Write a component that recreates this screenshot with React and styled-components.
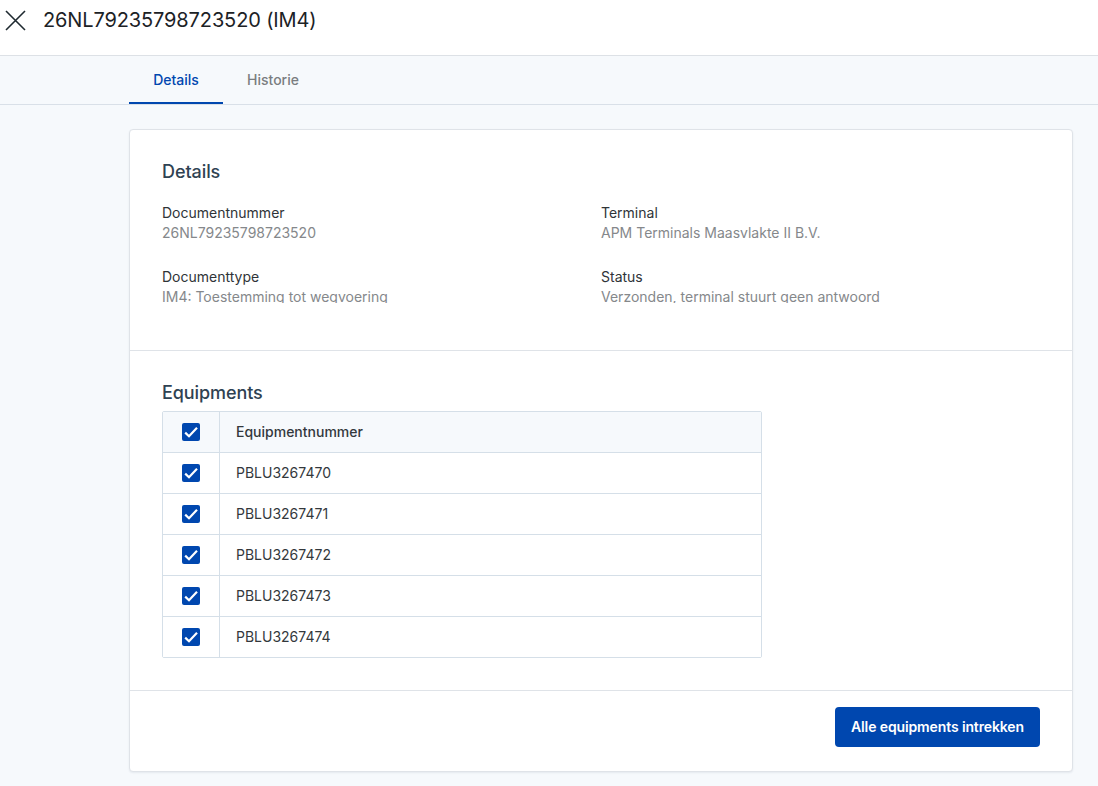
import React from "react";
import styled, { createGlobalStyle } from "styled-components";

const Global = createGlobalStyle`
  html, body { margin: 0; padding: 0; height: 100%; background: #f6f9fc; overflow: hidden; }
  body { font-family: Inter, "Liberation Sans", sans-serif; }
`;
const Page = styled.div`width: 1098px; height: 786px; overflow: hidden; background: #f6f9fc;`;
const Header = styled.header`
  height: 55px; background: #fff; border-bottom: 1px solid #dde1e6;
  display: flex; align-items: flex-start; box-sizing: content-box;
`;
const CloseButton = styled.button`
  width: 43px; height: 40px; padding: 0 0 0 5px; border: 0; background: none;
  display: flex; align-items: center; justify-content: flex-start; color: #1f2a30;
`;
const Title = styled.h1`
  margin: 0; font-size: 20px; line-height: 40px; font-weight: 400; color: #1c2226; letter-spacing: -0.125px;
`;
const TabBar = styled.nav`
  height: 48px; border-bottom: 1px solid #d9e0e8; padding-left: 129px; display: flex;
`;
const Tab = styled.div`
  width: ${p => p.$w}px; height: 48px; display: flex; align-items: center; justify-content: center;
  font-size: 14px; font-weight: 500; padding-top: 1px; box-sizing: border-box;
  color: ${p => (p.$active ? "#0047af" : "#7a7d80")};
  border-bottom: 2px solid ${p => (p.$active ? "#0047af" : "transparent")};
`;
const Main = styled.main`padding: 24px 25px 0 129px;`;
const Card = styled.section`
  background: #fff; border: 1px solid #dfe3e8; border-radius: 4px; height: 643px;
  box-sizing: border-box; box-shadow: 0 1px 2px rgba(30, 50, 80, 0.08);
  display: flex; flex-direction: column;
`;
const Section = styled.div`
  padding: ${p => p.$pad}; height: ${p => p.$h}px; box-sizing: border-box;
  border-bottom: ${p => (p.$line ? "1px solid #dfe3e8" : "0")};
`;
const Heading = styled.h2`
  margin: 0; font-size: 18px; line-height: 24px; font-weight: 500; color: #2f4252; letter-spacing: -0.08px;
`;
const Fields = styled.div`
  display: grid; grid-template-columns: 439px 1fr; grid-auto-rows: 40px; row-gap: 24px; margin-top: 19px;
  height: 100px; overflow: hidden;
`;
const Field = styled.div`font-size: 14px; line-height: 20px;`;
const Label = styled.div`color: #2f3438;`;
const Value = styled.div`color: #85888b;`;
const Table = styled.div`
  width: 600px; margin-top: 6px; border: 1px solid #d5dfe8; border-radius: 2px; box-sizing: border-box;
`;
const Row = styled.div`
  display: grid; grid-template-columns: 57px 1fr; height: ${p => (p.$last ? 40 : 41)}px;
  box-sizing: border-box; background: ${p => (p.$head ? "#f6f9fc" : "#fff")};
  border-bottom: ${p => (p.$last ? "0" : "1px solid #d5dfe8")};
`;
const CheckCell = styled.div`
  display: flex; align-items: center; justify-content: center; border-right: 1px solid #d5dfe8;
`;
const TextCell = styled.div`
  display: flex; align-items: center; padding: 0 0 1px 16px; box-sizing: border-box; font-size: 14px; color: #33383c;
  font-weight: ${p => (p.$head ? 500 : 400)};
`;
const Box = styled.span`
  width: 18px; height: 18px; border-radius: 2px; background: #0047af;
  display: flex; align-items: center; justify-content: center;
`;
const Footer = styled.div`flex: 1; padding: 16px 32px 0 0; display: flex; justify-content: flex-end; align-items: flex-start;`;
const Primary = styled.button`
  width: 205px; height: 40px; border: 0; border-radius: 4px; background: #0047af; color: #fff;
  padding: 0 0 2px; letter-spacing: -0.12px;
  font: 600 14px Inter, "Liberation Sans", sans-serif;
`;

const Check = () => (
  <Box>
    <svg width="18" height="18" viewBox="0 0 18 18" fill="none">
      <path d="M3.2 9.6 7 13.2 15 4.8" stroke="#fff" strokeWidth="2.2" />
    </svg>
  </Box>
);

const equipments = ["PBLU3267470", "PBLU3267471", "PBLU3267472", "PBLU3267473", "PBLU3267474"];
const fields = [
  ["Documentnummer", "26NL79235798723520"],
  ["Terminal", "APM Terminals Maasvlakte II B.V."],
  ["Documenttype", "IM4: Toestemming tot wegvoering"],
  ["Status", "Verzonden, terminal stuurt geen antwoord"],
];

export default function App() {
  return (
    <Page>
      <Global />
      <Header>
        <CloseButton aria-label="Sluiten">
          <svg width="21" height="21" viewBox="0 0 21 21" fill="none">
            <path d="M1 1 20 20M20 1 1 20" stroke="#1f2a30" strokeWidth="1.6" />
          </svg>
        </CloseButton>
        <Title>26NL79235798723520 (IM4)</Title>
      </Header>
      <TabBar>
        <Tab $active $w={94}>Details</Tab>
        <Tab $w={100}>Historie</Tab>
      </TabBar>
      <Main>
        <Card>
          <Section $line $h={221} $pad="30px 32px 0">
            <Heading>Details</Heading>
            <Fields>
              {fields.map(([l, v]) => (
                <Field key={l}>
                  <Label>{l}</Label>
                  <Value>{v}</Value>
                </Field>
              ))}
            </Fields>
          </Section>
          <Section $line $h={340} $pad="30px 32px 0">
            <Heading>Equipments</Heading>
            <Table>
              <Row $head>
                <CheckCell><Check /></CheckCell>
                <TextCell $head>Equipmentnummer</TextCell>
              </Row>
              {equipments.map((e, i) => (
                <Row key={e} $last={i === equipments.length - 1}>
                  <CheckCell><Check /></CheckCell>
                  <TextCell>{e}</TextCell>
                </Row>
              ))}
            </Table>
          </Section>
          <Footer>
            <Primary>Alle equipments intrekken</Primary>
          </Footer>
        </Card>
      </Main>
    </Page>
  );
}
